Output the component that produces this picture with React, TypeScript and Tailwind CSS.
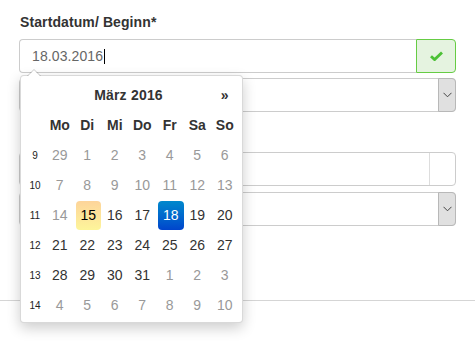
import React from "react";

const weeks: { wk: number; days: { d: number; old?: boolean; today?: boolean; active?: boolean }[] }[] = [
  { wk: 9, days: [29, 1, 2, 3, 4, 5, 6].map((d) => ({ d, old: true })) },
  { wk: 10, days: [7, 8, 9, 10, 11, 12, 13].map((d) => ({ d, old: true })) },
  {
    wk: 11,
    days: [
      { d: 14, old: true },
      { d: 15, today: true },
      { d: 16 },
      { d: 17 },
      { d: 18, active: true },
      { d: 19 },
      { d: 20 },
    ],
  },
  { wk: 12, days: [21, 22, 23, 24, 25, 26, 27].map((d) => ({ d })) },
  { wk: 13, days: [{ d: 28 }, { d: 29 }, { d: 30 }, { d: 31 }, { d: 1, old: true }, { d: 2, old: true }, { d: 3, old: true }] },
  { wk: 14, days: [4, 5, 6, 7, 8, 9, 10].map((d) => ({ d, old: true })) },
];

function Chevron() {
  return (
    <svg width="9" height="6" viewBox="0 0 9 6">
      <polyline points="0.5,0.8 4.5,4.8 8.5,0.8" fill="none" stroke="#444" strokeWidth="1" />
    </svg>
  );
}

function Select({ className }: { className?: string }) {
  return (
    <div className={"flex h-[34px] rounded-[4px] border border-[#ccc] bg-white " + (className ?? "")}>
      <div className="flex-1" />
      <div className="w-[18px] -my-px -mr-px rounded-r-[4px] border border-[#b8b8b8] bg-[#e0e0e0] flex items-center justify-center">
        <Chevron />
      </div>
    </div>
  );
}

export default function App() {
  return (
    <div className="relative w-[475px] h-[343px] bg-white overflow-hidden font-['Liberation_Sans',Arial,sans-serif]">
      <div className="px-[19px] pt-[13px]">
        <label className="block pl-[1px] text-[14px] leading-[19px] font-bold tracking-[0.1px] text-[#333]">Startdatum/ Beginn*</label>
        <div className="mt-[7px] flex h-[34px]">
          <div className="flex-1 flex items-center rounded-l-[4px] border border-r-0 border-[#ccc] pl-[12px] text-[14px] text-[#666]">
            <span className="tracking-[0.1px]">18.03.2016</span>
            <span className="ml-[1px] inline-block w-px h-[15px] bg-black" />
          </div>
          <div className="w-[40px] flex items-center justify-center rounded-r-[4px] border border-[#66cc44] bg-[#e5f3e0]">
            <svg width="13" height="10" viewBox="0 0 13 10">
              <path d="M1 5.2 L4.6 8.6 L12 1.4" fill="none" stroke="#4cc136" strokeWidth="2.8" strokeLinejoin="miter" />
            </svg>
          </div>
        </div>
        <Select className="mt-[5px]" />
        <div className="mt-[40px] flex h-[34px] rounded-[4px] border border-[#ccc] bg-white">
          <div className="flex-1" />
          <div className="w-[26px] border-l border-[#ddd]" />
        </div>
        <Select className="mt-[6px] h-[33px]" />
      </div>
      <div className="mt-[74px] h-px bg-[#d5d5d5]" />

      <div className="absolute left-[20px] top-[75px] w-[223px] rounded-[4px] border border-[rgba(0,0,0,0.15)] bg-white pl-[3px] pt-[4px] pb-[2px] shadow-[0_5px_14px_rgba(0,0,0,0.2)]">
        <div className="absolute left-[6px] -top-[7px] w-0 h-0 border-x-[7px] border-x-transparent border-b-[7px] border-b-[rgba(0,0,0,0.2)]" />
        <div className="absolute left-[7px] -top-[6px] w-0 h-0 border-x-[6px] border-x-transparent border-b-[6px] border-b-white" />
        <div className="grid grid-cols-[22px_repeat(7,27.5px)] text-[14px] text-[#333]">
          <div className="h-[30px]" />
          <div className="col-span-6 h-[30px] flex items-center justify-center font-bold tracking-[0.2px]">März 2016</div>
          <div className="h-[30px] flex items-center justify-center font-bold">»</div>
          <div className="h-[30px]" />
          {["Mo", "Di", "Mi", "Do", "Fr", "Sa", "So"].map((w) => (
            <div key={w} className="h-[30px] flex items-center justify-center font-bold">
              {w}
            </div>
          ))}
          {weeks.map((row) => (
            <React.Fragment key={row.wk}>
              <div className="h-[30px] flex items-center justify-center text-[10px] text-[#222]">{row.wk}</div>
              {row.days.map((c, i) => (
                <div key={i} className="h-[30px] flex items-center justify-center">
                  {c.today ? (
                    <div className="w-[26px] h-[29px] ml-[2px] rounded-[4px] bg-gradient-to-b from-[#fdd49a] to-[#fdf59a] flex items-center justify-center text-black">
                      {c.d}
                    </div>
                  ) : c.active ? (
                    <div className="w-[26px] h-[29px] ml-[2px] rounded-[4px] bg-gradient-to-b from-[#0088cc] to-[#0044cc] flex items-center justify-center text-white">
                      {c.d}
                    </div>
                  ) : (
                    <span className={c.old ? "text-[#999]" : "text-[#333]"}>{c.d}</span>
                  )}
                </div>
              ))}
            </React.Fragment>
          ))}
        </div>
      </div>
    </div>
  );
}
